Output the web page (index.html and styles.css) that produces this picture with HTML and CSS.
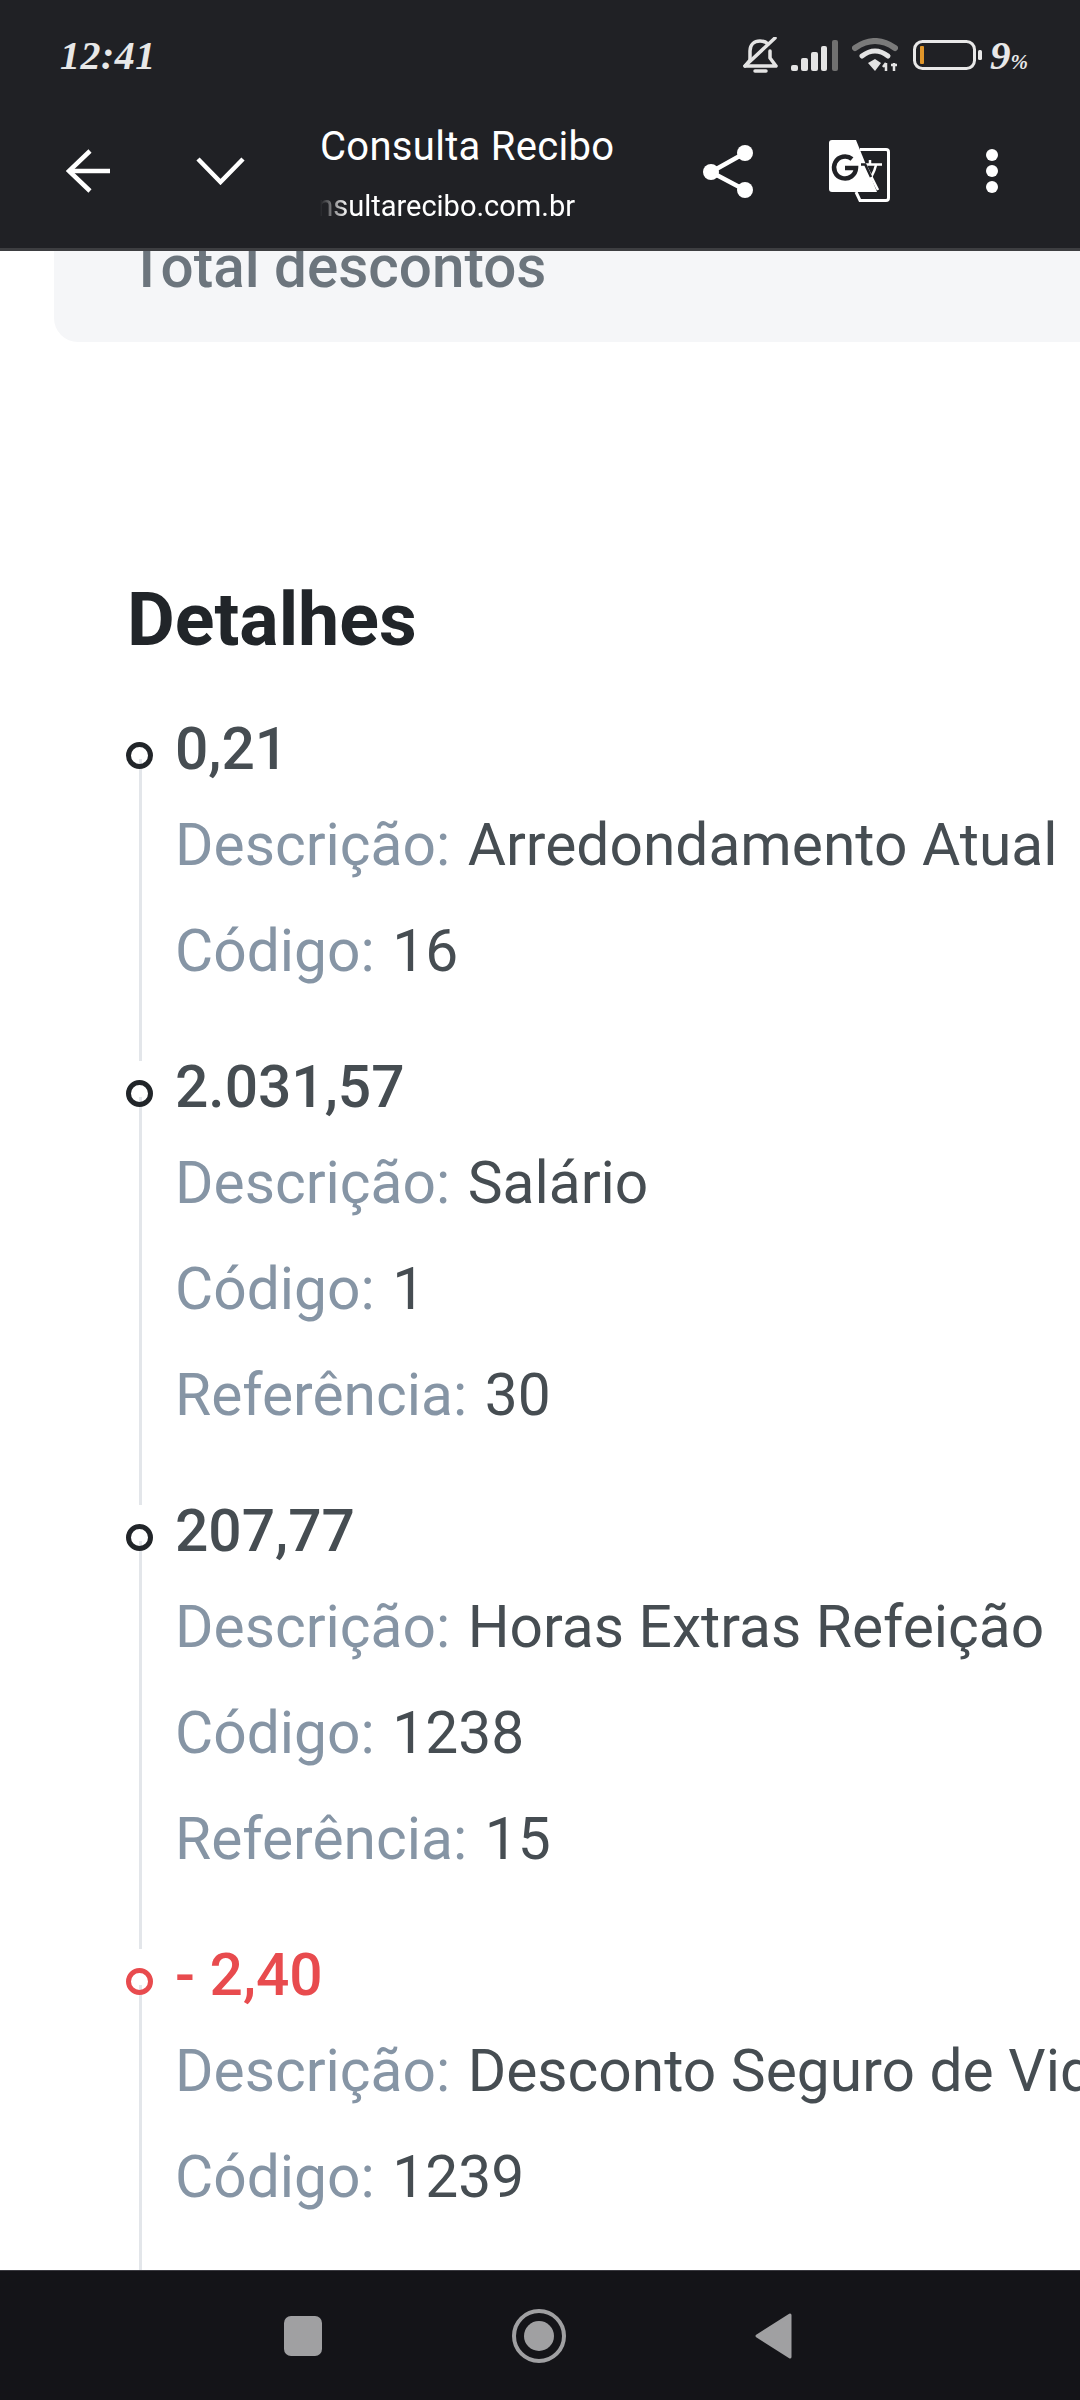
FILE: index.html
```html
<!DOCTYPE html>
<html lang="pt-BR">
<head>
    <meta charset="UTF-8">
    <title>Consulta Recibo</title>
    <link rel="stylesheet" href="styles.css">
</head>
<body>
<header class="topbar">
    <div class="status">
        <span class="time">12:41</span>
        <div class="status-icons">
            <svg class="ic-bell" width="35" height="37" viewBox="0 0 35 37" fill="none" stroke="#e4e4e4" stroke-width="3.500" stroke-linecap="round" stroke-linejoin="round">
                <path d="M7 22V14C7 8 11 4 17 4C20 4 23 5 25 7"/>
                <path d="M27 14V21L33 29H2L7 23"/>
                <path d="M32 1L2 29"/>
                <path d="M12 34H23" stroke-width="3.500"/>
            </svg>
            <svg class="ic-signal" width="47" height="31" viewBox="0 0 47 31">
                <rect x="0" y="25" width="7" height="6" rx="2" fill="#e4e4e4"/>
                <rect x="10" y="18" width="7" height="13" rx="2" fill="#e4e4e4"/>
                <rect x="20" y="12" width="7" height="19" rx="2" fill="#e4e4e4"/>
                <rect x="30" y="6" width="6" height="25" rx="2" fill="#e4e4e4"/>
                <rect x="41" y="0" width="6" height="31" rx="2" fill="#707070"/>
            </svg>
            <svg class="ic-wifi" width="46" height="34" viewBox="0 0 46 34" fill="none">
                <path d="M3 10Q23 -4 43 10" stroke="#7a7a7a" stroke-width="6" stroke-linecap="round"/>
                <path d="M10 18Q23 8 36 18" stroke="#e4e4e4" stroke-width="5" stroke-linecap="round"/>
                <path d="M16 25L23 21L29 25L23 33Z" fill="#e4e4e4"/>
                <path d="M34 33V25M31 29L34 25M42 33V25M39 27H45" stroke="#e4e4e4" stroke-width="2.5"/>
            </svg>
            <svg class="ic-battery" width="69" height="30" viewBox="0 0 69 30" fill="none">
                <rect x="1.5" y="1.5" width="60" height="27" rx="8" stroke="#e8e8e8" stroke-width="3"/>
                <rect x="7" y="6" width="4" height="18" rx="1" fill="#e0962a"/>
                <rect x="65" y="10" width="4" height="10" rx="1.5" fill="#e8e8e8"/>
            </svg>
            <span class="batt"><b>9</b><small>%</small></span>
        </div>
    </div>
    <div class="toolbar">
        <svg class="ic-back" width="44" height="44" viewBox="0 0 44 44" fill="none" stroke="#fff" stroke-width="4.5">
            <path d="M44 22H3"/>
            <path d="M24 2L3 22L24 42"/>
        </svg>
        <svg class="ic-down" width="49" height="28" viewBox="0 0 49 28" fill="none" stroke="#fff" stroke-width="4.5">
            <path d="M2 2L24.500 25L47 2"/>
        </svg>
        <div class="title-box">
            <div class="title">Consulta Recibo</div>
            <div class="url"><span>consultarecibo.com.br</span></div>
        </div>
        <svg class="ic-share" width="50" height="55" viewBox="0 0 50 55" fill="#fff" stroke="#fff">
            <path d="M8 28L42 9M8 28L42 46" stroke-width="4.500" fill="none"/>
            <circle cx="8" cy="28" r="8" stroke="none"/>
            <circle cx="42" cy="9" r="8" stroke="none"/>
            <circle cx="42" cy="46" r="8" stroke="none"/>
        </svg>
        <svg class="ic-translate" width="61" height="62" viewBox="0 0 61 62" fill="none">
            <path d="M31 9.500H57Q59.500 9.500 59.500 12V58Q59.500 60.500 57 60.500H31L27 52" stroke="#fff" stroke-width="3"/>
            <path d="M3 0H27L48 52H3Q0 52 0 49V3Q0 0 3 0Z" fill="#fff"/>
            <path d="M23 19A11 11 0 1 0 27 28H16" stroke="#202125" stroke-width="4.500"/>
            <path d="M32 24.500H53M41 20V24" stroke="#fff" stroke-width="2.500"/>
            <path d="M36 24L49 50" stroke="#fff" stroke-width="2.500"/>
            <path d="M47 25C45 34 41 40 35 45" stroke="#fff" stroke-width="2.500"/>
            <path d="M32 24.500H37M36 24L42 37" stroke="#202125" stroke-width="2.500"/>
        </svg>
        <svg class="ic-more" width="12" height="44" viewBox="0 0 12 44" fill="#fff">
            <circle cx="6" cy="6" r="6"/>
            <circle cx="6" cy="22" r="6"/>
            <circle cx="6" cy="38" r="6"/>
        </svg>
    </div>
</header>

<main class="content">
    <div class="card">Total descontos</div>
    <h2 class="heading">Detalhes</h2>
    <ul class="timeline">
        <li>
            <p class="amount">0,21</p>
            <p class="row"><span>Descrição:</span> Arredondamento Atual</p>
            <p class="row"><span>Código:</span> 16</p>
        </li>
        <li>
            <p class="amount">2.031,57</p>
            <p class="row"><span>Descrição:</span> Salário</p>
            <p class="row"><span>Código:</span> 1</p>
            <p class="row"><span>Referência:</span> 30</p>
        </li>
        <li>
            <p class="amount">207,77</p>
            <p class="row"><span>Descrição:</span> Horas Extras Refeição</p>
            <p class="row"><span>Código:</span> 1238</p>
            <p class="row"><span>Referência:</span> 15</p>
        </li>
        <li class="minus">
            <p class="amount">- 2,40</p>
            <p class="row"><span>Descrição:</span> Desconto Seguro de Vida</p>
            <p class="row"><span>Código:</span> 1239</p>
        </li>
    </ul>
</main>

<footer class="navbar">
    <div class="nav-square"></div>
    <svg width="54" height="54" viewBox="0 0 54 54" fill="#a0a0a2">
        <circle cx="27" cy="27" r="25" fill="none" stroke="#a0a0a2" stroke-width="4"/>
        <circle cx="27" cy="27" r="15"/>
    </svg>
    <svg width="37" height="46" viewBox="0 0 37 46" fill="#a0a0a2" stroke="#a0a0a2" stroke-width="3" stroke-linejoin="round">
        <path d="M35 2V44L2 23Z"/>
    </svg>
</footer>
</body>
</html>
```

FILE: styles.css
```css
*, *::before, *::after {margin:0; padding:0; box-sizing:border-box; list-style:none;}
html, body {width:1080px; height:2400px; overflow:hidden;}
body {display:flex; flex-direction:column; background:#fff; font-family:Roboto, "Noto Sans", sans-serif;}

.topbar {flex:none; height:251px; background:#202125; border-bottom:3px solid #3d3e41; position:relative; z-index:1;}
.status {display:flex; justify-content:space-between; align-items:center; height:94px; padding:16px 52px 0 60px;}
.time {font:italic bold 40px "Liberation Serif", serif; color:#e8e8e8; letter-spacing:.5px;}
.status-icons {display:flex; align-items:center;}
.ic-bell {margin-right:13px;}
.ic-signal {margin-right:14px;}
.ic-wifi {margin-right:15px;}
.ic-battery {margin-right:8px;}
.batt {font:italic bold 41px "Liberation Serif", serif; color:#e8e8e8; display:flex; align-items:baseline;}
.batt small {font-size:21px;}

.toolbar {display:flex; align-items:center; height:154px;}
.ic-back {margin-left:66px;}
.ic-down {margin-left:86px;}
.title-box {width:383px; margin-left:75px; padding-top:6px; color:#fff;}
.title {font-size:40px; line-height:50px; white-space:nowrap; letter-spacing:.3px;}
.url {width:255px; margin-top:14px; font-size:29px; line-height:40px; display:flex; justify-content:flex-end; overflow:hidden; white-space:nowrap; -webkit-mask-image:linear-gradient(90deg, transparent 0, #000 28px); mask-image:linear-gradient(90deg, transparent 0, #000 28px);}
.url span {flex:none;}
.ic-translate {margin-left:76px;}
.ic-more {margin-left:96px;}

.content {flex:1; min-height:0; overflow:hidden;}
.card {margin:-24px -40px 0 54px; padding:0 0 35px 75px; background:#f5f6f8; border-radius:0 0 24px 24px; font-size:58.400px; line-height:80px; font-weight:500; color:#6c757d;}
.heading {margin:235px 0 44px 127px; font-size:73.500px; line-height:86px; font-weight:700; color:#212529;}

.timeline {margin-left:126px;}
.timeline li {position:relative; padding:0 0 30px 49px; white-space:nowrap;}
.timeline li::before {content:""; position:absolute; left:13px; top:52px; bottom:-16px; width:3px; background:#e3e6ea;}
.timeline li::after {content:""; position:absolute; left:0; top:35px; width:27px; height:27px; border:5px solid #212529; border-radius:50%;}
.timeline li.minus::after {border-color:#e84b4e;}
.amount {margin-bottom:12px; font-size:58.700px; line-height:84px; font-weight:500; color:#464d52;}
.minus .amount {color:#e84b4e;}
.row {margin-bottom:22px; font-size:58.700px; line-height:84px; color:#464d52;}
.row span {margin-right:3px; color:#8695a5;}

.navbar {flex:none; height:130px; display:flex; align-items:center; background:#141418; border-top:1px solid #3a3a40; padding:0 288px 0 284px; justify-content:space-between;}
.nav-square {width:38px; height:40px; background:#a0a0a2; border-radius:7px;}
```
